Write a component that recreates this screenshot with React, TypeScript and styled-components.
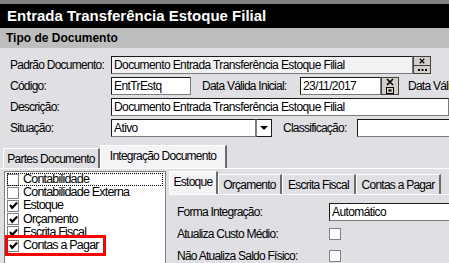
import React from 'react';
import styled, { createGlobalStyle } from 'styled-components';

const BG = '#e0dfe3';
const FONT = '"Liberation Sans", Arial, sans-serif';

const GlobalStyle = createGlobalStyle`
  html, body {
    margin: 0;
    padding: 0;
    background: ${BG};
  }
`;

const Window = styled.div`
  width: 449px;
  height: 263px;
  overflow: hidden;
  display: flex;
  flex-direction: column;
  background: ${BG};
  font-family: ${FONT};
  font-size: 12px;
  letter-spacing: -0.75px;
  line-height: 14px;
  color: #000;
`;

const TopStrip = styled.div`
  height: 4px;
  background: #808080;
`;

const TitleBar = styled.div`
  height: 24px;
  background: #000;
  color: #fff;
  font-weight: bold;
  font-size: 15px;
  letter-spacing: 0;
  display: flex;
  align-items: center;
  padding-left: 7px;
  white-space: nowrap;
`;

const SectionBar = styled.div`
  height: 20px;
  background: #bebebe;
  font-weight: bold;
  font-size: 12px;
  letter-spacing: 0;
  display: flex;
  align-items: center;
  padding-left: 6px;
`;

const Form = styled.div`
  display: flex;
  flex-direction: column;
  gap: 3px;
  padding: 8px 0 0 10px;
`;

const Row = styled.div`
  display: flex;
  align-items: center;
  height: 18px;
  white-space: nowrap;
`;

const Label = styled.span<{ $w?: number; $ml?: number }>`
  width: ${(p) => (p.$w ? `${p.$w}px` : 'auto')};
  margin-left: ${(p) => p.$ml ?? 0}px;
  flex-shrink: 0;
`;

const Field = styled.div<{ $w?: number; $grey?: boolean; $ml?: number }>`
  box-sizing: border-box;
  height: 18px;
  width: ${(p) => (p.$w ? `${p.$w}px` : 'auto')};
  flex: ${(p) => (p.$w ? '0 0 auto' : '1 0 300px')};
  margin-left: ${(p) => p.$ml ?? 0}px;
  background: ${(p) => (p.$grey ? '#f2f1f4' : '#fff')};
  border: 1px solid #1a1a1a;
  border-right-color: #7a7a7a;
  border-bottom-color: #7a7a7a;
  padding: 0 2px;
  display: flex;
  align-items: center;
  overflow: hidden;
  letter-spacing: -0.6px;
`;

const SideButton = styled.div`
  box-sizing: border-box;
  width: 18px;
  height: 18px;
  background: #d4d0c8;
  border: 1px solid #404040;
  display: flex;
  flex-direction: column;
  flex-shrink: 0;
`;

const ButtonHalf = styled.div<{ $top?: boolean }>`
  flex: 1;
  display: flex;
  align-items: center;
  justify-content: center;
  border-bottom: ${(p) => (p.$top ? '1px solid #404040' : 'none')};
`;

const SelectArrow = styled.div`
  box-sizing: border-box;
  width: 16px;
  height: 18px;
  flex-shrink: 0;
  background: #fff;
  border: 1px solid #1a1a1a;
  border-left: 1px solid #808080;
  display: flex;
  align-items: center;
  justify-content: center;
  &::after {
    content: '';
    border-left: 4px solid transparent;
    border-right: 4px solid transparent;
    border-top: 4px solid #000;
  }
`;

const TabStrip = styled.div`
  display: flex;
  align-items: flex-end;
  height: 23px;
  margin-top: 8px;
  padding-left: 3px;
`;

const Tab = styled.div<{ $active?: boolean; $w: number }>`
  box-sizing: border-box;
  width: ${(p) => p.$w}px;
  height: ${(p) => (p.$active ? 23 : 20)}px;
  padding-bottom: ${(p) => (p.$active ? 2 : 0)}px;
  background: ${(p) => (p.$active ? '#f4f3f6' : BG)};
  border: 1px solid #fff;
  border-bottom: none;
  border-right: 2px solid #6b6b6b;
  display: flex;
  align-items: center;
  justify-content: center;
  white-space: nowrap;
`;

const Panel = styled.div`
  flex: 1;
  display: flex;
  gap: 3px;
  border-top: 1px solid #fff;
  padding: 2px 0 0 4px;
  min-height: 0;
`;

const CheckList = styled.div`
  box-sizing: border-box;
  width: 162px;
  height: 120px;
  flex-shrink: 0;
  background: #fff;
  border: 1px solid #808080;
  border-bottom: none;
  padding: 1px 0 0 2px;
  display: flex;
  flex-direction: column;
`;

const CheckItem = styled.div<{ $focus?: boolean; $mark?: boolean }>`
  position: relative;
  display: flex;
  align-items: center;
  height: 13.2px;
  line-height: 13px;
  gap: 4px;
  font-size: 12.5px;
  letter-spacing: -0.8px;
  white-space: nowrap;
  outline: ${(p) => (p.$focus ? '1px dotted #000' : 'none')};
  outline-offset: -1px;
  margin-right: ${(p) => (p.$focus ? 2 : 0)}px;
  &::after {
    content: '';
    display: ${(p) => (p.$mark ? 'block' : 'none')};
    position: absolute;
    left: -2px;
    top: -4px;
    box-sizing: border-box;
    width: 101px;
    height: 21px;
    border: 3px solid #ff0000;
  }
`;

const Box = styled.span`
  box-sizing: border-box;
  width: 12px;
  height: 12px;
  flex-shrink: 0;
  background: #fff;
  border: 1px solid #808080;
  display: flex;
  align-items: center;
  justify-content: center;
`;

const Right = styled.div`
  flex: 1;
  display: flex;
  flex-direction: column;
  padding-top: 1px;
`;

const InnerTabs = styled.div`
  display: flex;
  align-items: flex-end;
  height: 22px;
`;

const InnerPanel = styled.div`
  flex: 1;
  border-top: 1px solid #fff;
  padding: 8px 0 0 8px;
  display: flex;
  flex-direction: column;
  gap: 4px;
`;

const Check = () => (
  <svg width="9" height="9" viewBox="0 0 9 9">
    <path d="M1 4 L3.2 6.8 L8.2 1.5" stroke="#000" strokeWidth="2.2" fill="none" />
  </svg>
);

const SmallX = ({ size }: { size: number }) => (
  <svg width={size} height={size} viewBox="0 0 8 8">
    <path d="M1 1 L7 7 M7 1 L1 7" stroke="#000" strokeWidth="1.6" />
  </svg>
);

const Dots = () => (
  <svg width="9" height="3" viewBox="0 0 9 3">
    <rect x="0" y="1" width="2" height="2" fill="#000" />
    <rect x="3.5" y="1" width="2" height="2" fill="#000" />
    <rect x="7" y="1" width="2" height="2" fill="#000" />
  </svg>
);

const Calendar = () => (
  <svg width="8" height="7" viewBox="0 0 8 7">
    <rect x="0.5" y="0.5" width="7" height="6" fill="none" stroke="#000" />
    <rect x="2.5" y="2.5" width="3" height="2" fill="#000" />
  </svg>
);

const items = [
  { label: 'Contabilidade', checked: false, focus: true },
  { label: 'Contabilidade Externa', checked: false },
  { label: 'Estoque', checked: true },
  { label: 'Orçamento', checked: true },
  { label: 'Escrita Fiscal', checked: true },
  { label: 'Contas a Pagar', checked: true, mark: true },
];

export default function App() {
  return (
    <Window>
      <GlobalStyle />
      <TopStrip />
      <TitleBar>Entrada Transferência Estoque Filial</TitleBar>
      <SectionBar>Tipo de Documento</SectionBar>
      <Form>
        <Row>
          <Label $w={101}>Padrão Documento:</Label>
          <Field $w={302} $grey>Documento Entrada Transferência Estoque Filial</Field>
          <SideButton>
            <ButtonHalf $top><SmallX size={6} /></ButtonHalf>
            <ButtonHalf><Dots /></ButtonHalf>
          </SideButton>
        </Row>
        <Row>
          <Label $w={101}>Código:</Label>
          <Field $w={80}>EntTrEstq</Field>
          <Label $w={98} $ml={11}>Data Válida Inicial:</Label>
          <Field $w={81}>23/11/2017</Field>
          <SideButton>
            <ButtonHalf><SmallX size={8} /></ButtonHalf>
            <ButtonHalf><Calendar /></ButtonHalf>
          </SideButton>
          <Label $ml={9}>Data Válida Final:</Label>
        </Row>
        <Row>
          <Label $w={101}>Descrição:</Label>
          <Field>Documento Entrada Transferência Estoque Filial</Field>
        </Row>
        <Row>
          <Label $w={101}>Situação:</Label>
          <Field $w={145}>Ativo</Field>
          <SelectArrow />
          <Label $w={74} $ml={11}>Classificação:</Label>
          <Field />
        </Row>
      </Form>
      <TabStrip>
        <Tab $w={97}>Partes Documento</Tab>
        <Tab $w={127} $active>Integração Documento</Tab>
      </TabStrip>
      <Panel>
        <CheckList>
          {items.map((it) => (
            <CheckItem key={it.label} $focus={it.focus} $mark={it.mark}>
              <Box>{it.checked && <Check />}</Box>
              {it.label}
            </CheckItem>
          ))}
        </CheckList>
        <Right>
          <InnerTabs>
            <Tab $w={49} $active>Estoque</Tab>
            <Tab $w={64}>Orçamento</Tab>
            <Tab $w={74}>Escrita Fiscal</Tab>
            <Tab $w={85}>Contas a Pagar</Tab>
          </InnerTabs>
          <InnerPanel>
            <Row>
              <Label $w={152}>Forma Integração:</Label>
              <Field>Automático</Field>
            </Row>
            <Row>
              <Label $w={152}>Atualiza Custo Médio:</Label>
              <Box />
            </Row>
            <Row>
              <Label $w={152}>Não Atualiza Saldo Físico:</Label>
              <Box />
            </Row>
          </InnerPanel>
        </Right>
      </Panel>
    </Window>
  );
}
